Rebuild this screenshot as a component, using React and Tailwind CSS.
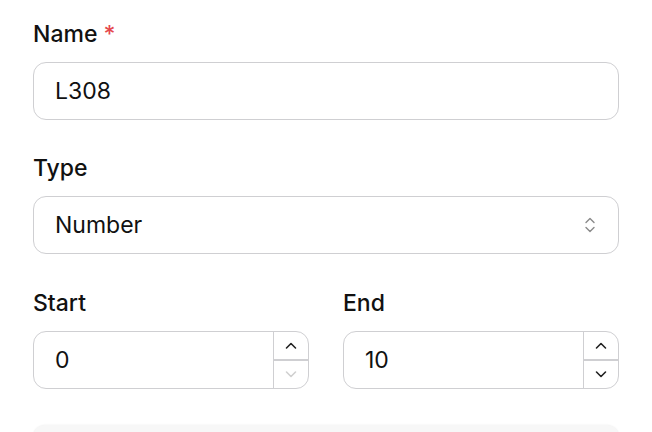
import React from "react";

function Chevrons() {
  return (
    <svg width="14" height="20" viewBox="0 0 14 20" fill="none" stroke="#8a8a8a" strokeWidth="1.4" strokeLinecap="round" strokeLinejoin="round">
      <path d="M3 7.5 L7 3.5 L11 7.5" />
      <path d="M3 12.5 L7 16.5 L11 12.5" />
    </svg>
  );
}

function Up({ color }) {
  return (
    <svg width="14" height="10" viewBox="0 0 14 10" fill="none" stroke={color} strokeWidth="1.6" strokeLinecap="round" strokeLinejoin="round">
      <path d="M2.5 7 L7 2.5 L11.5 7" />
    </svg>
  );
}

function Down({ color }) {
  return (
    <svg width="14" height="10" viewBox="0 0 14 10" fill="none" stroke={color} strokeWidth="1.6" strokeLinecap="round" strokeLinejoin="round">
      <path d="M2.5 3 L7 7.5 L11.5 3" />
    </svg>
  );
}

function NumberField({ label, value, downDisabled }) {
  return (
    <div className="flex flex-col gap-[14px]">
      <div className="text-[23px] leading-7 font-medium text-[#111]">{label}</div>
      <div className="flex h-[58px] rounded-[13px] border-[1.5px] border-[#cfcfd2] bg-white overflow-hidden">
        <div className="flex-1 flex items-center pl-[21px] text-[23px] text-[#111]">{value}</div>
        <div className="w-[35px] flex flex-col border-l-[1.5px] border-[#cfcfd2]">
          <div className="flex-1 flex items-center justify-center">
            <Up color="#222" />
          </div>
          <div className="h-[1.5px] bg-[#cfcfd2]" />
          <div className="flex-1 flex items-center justify-center">
            <Down color={downDisabled ? "#d0d0d0" : "#222"} />
          </div>
        </div>
      </div>
    </div>
  );
}

export default function App() {
  return (
    <div className="w-[652px] h-[432px] overflow-hidden bg-white" style={{ fontFamily: "Inter, 'Noto Sans', sans-serif" }}>
      <div className="px-[33px] pt-[20px] flex flex-col">
        <div className="flex flex-col gap-[14px]">
          <div className="text-[23px] leading-7 font-medium text-[#111]">
            Name <span className="text-[#e5484d]">*</span>
          </div>
          <div className="h-[58px] rounded-[13px] border-[1.5px] border-[#cfcfd2] flex items-center pl-[21px] text-[23px] text-[#111]">
            L308
          </div>
        </div>
        <div className="flex flex-col gap-[14px] mt-[34px]">
          <div className="text-[23px] leading-7 font-medium text-[#111]">Type</div>
          <div className="h-[58px] rounded-[13px] border-[1.5px] border-[#cfcfd2] flex items-center justify-between pl-[21px] pr-[21px] text-[23px] text-[#111]">
            <span>Number</span>
            <Chevrons />
          </div>
        </div>
        <div className="grid grid-cols-2 gap-[34px] mt-[35px]">
          <NumberField label="Start" value="0" downDisabled />
          <NumberField label="End" value="10" />
        </div>
        <div className="mt-[36px] h-[40px] rounded-xl bg-[#f7f7f7] shadow-[0_0_2px_rgba(0,0,0,0.08)]" />
      </div>
    </div>
  );
}
